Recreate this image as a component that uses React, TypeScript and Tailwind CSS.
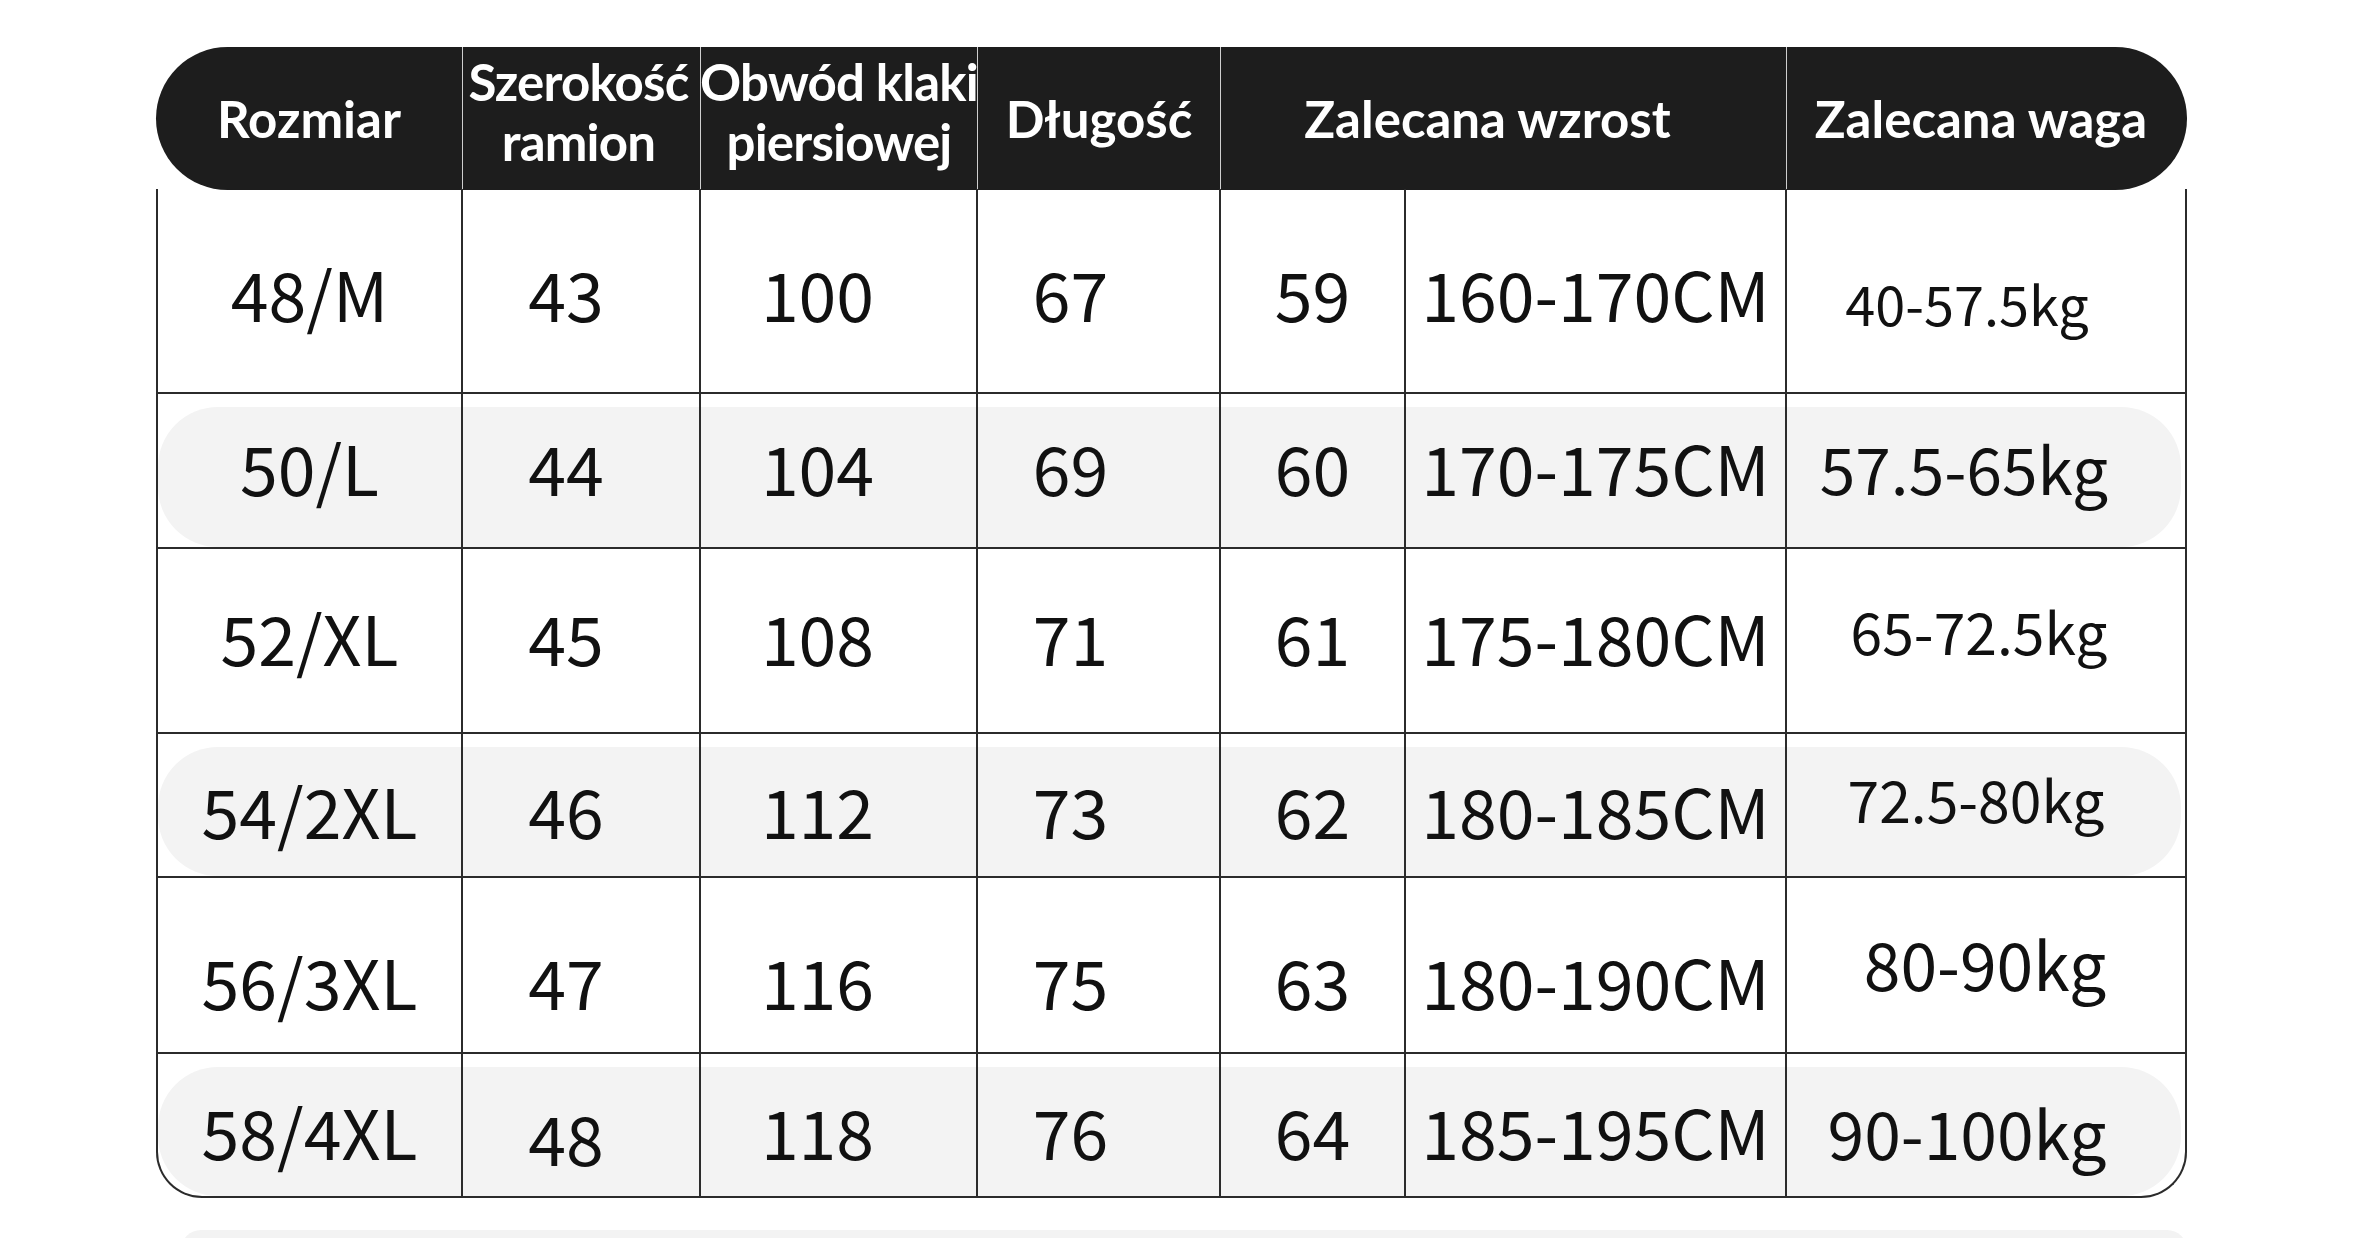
import React from 'react';

type Row = {
  size: string;
  shoulder: string;
  chest: string;
  length: string;
  extra: string;
  height: string;
  weight: string;
  h: string;
  shade: boolean;
  off: string;
  wCls: string;
  shoulderCls?: string;
};

const rows: Row[] = [
  { size: '48/M', shoulder: '43', chest: '100', length: '67', extra: '59', height: '160-170CM', weight: '40-57.5kg', h: 'h-[205px]', shade: false, off: 'pt-[4px]', wCls: 'text-[54px] pt-[24px] pr-[38px]' },
  { size: '50/L', shoulder: '44', chest: '104', length: '69', extra: '60', height: '170-175CM', weight: '57.5-65kg', h: 'h-[155px]', shade: true, off: 'pb-[8px]', wCls: 'text-[64px] pb-[8px] pr-[44px]' },
  { size: '52/XL', shoulder: '45', chest: '108', length: '71', extra: '61', height: '175-180CM', weight: '65-72.5kg', h: 'h-[185px]', shade: false, off: 'pb-[8px]', wCls: 'text-[57px] pb-[20px] pr-[14px]' },
  { size: '54/2XL', shoulder: '46', chest: '112', length: '73', extra: '62', height: '180-185CM', weight: '72.5-80kg', h: 'h-[144px]', shade: true, off: 'pt-[10px]', wCls: 'text-[57px] pb-[14px] pr-[20px]' },
  { size: '56/3XL', shoulder: '47', chest: '116', length: '75', extra: '63', height: '180-190CM', weight: '80-90kg', h: 'h-[176px]', shade: false, off: 'pt-[32px]', wCls: 'text-[66px] pb-[6px] pr-[2px]' },
  { size: '58/4XL', shoulder: '48', chest: '118', length: '76', extra: '64', height: '185-195CM', weight: '90-100kg', h: 'h-[142px]', shade: true, off: 'pt-[12px]', wCls: 'text-[66px] pt-[12px] pr-[38px]', shoulderCls: 'pt-[24px]' },
];

const cell = 'relative flex items-center justify-center border-r-2 border-[#2b2b2b] whitespace-nowrap';
const head = 'flex flex-col items-center justify-center border-r border-[#cfcfcf] whitespace-nowrap';

export default function App() {
  return (
    <div className="w-full h-[1238px] bg-white overflow-hidden pt-[47px] pl-[156px] text-[#111]" style={{ fontFamily: '"Noto Sans CJK SC", "Noto Sans", sans-serif' }}>
      <div className="w-[2031px]">
        {/* nagłówek */}
        <div
          className="grid grid-cols-[307px_238px_277px_243px_566px_400px] h-[143px] bg-[#1d1d1d] rounded-[72px] text-white font-bold text-[51px] leading-[1.16]"
          style={{ fontFamily: 'Lato, "Noto Sans", sans-serif' }}
        >
          <div className={head}>Rozmiar</div>
          <div className={`${head} pr-[6px] pb-[14px] tracking-[-0.8px]`}>
            <span>Szerokość</span>
            <span>ramion</span>
          </div>
          <div className={`${head} pb-[14px] tracking-[-0.8px]`}>
            <span>Obwód klaki</span>
            <span>piersiowej</span>
          </div>
          <div className={head}>Długość</div>
          <div className={`${head} pr-[32px]`}>Zalecana wzrost</div>
          <div className="flex items-center justify-center whitespace-nowrap pr-[12px]">Zalecana waga</div>
        </div>

        {/* wiersze */}
        <div className="border-x-2 border-b-2 border-[#2b2b2b] rounded-b-[46px] overflow-hidden -mt-[1px]">
          {rows.map((r, i) => (
            <div
              key={r.size}
              className={`relative grid grid-cols-[305px_238px_277px_243px_185px_381px_398px] ${r.h} ${i < rows.length - 1 ? 'border-b-2 border-[#2b2b2b]' : ''} text-[68px] leading-none`}
            >
              {r.shade && <div className="absolute left-0 right-[4px] top-[13px] bottom-0 rounded-[60px] bg-[#f3f3f3]" />}
              <div className={`${cell} ${r.off}`}>{r.size}</div>
              <div className={`${cell} ${r.shoulderCls ?? r.off} pr-[30px]`}>{r.shoulder}</div>
              <div className={`${cell} ${r.off} pr-[42px]`}>{r.chest}</div>
              <div className={`${cell} ${r.off} pr-[56px]`}>{r.length}</div>
              <div className={`${cell} ${r.off}`}>{r.extra}</div>
              <div className={`${cell} ${r.off}`}>{r.height}</div>
              <div className={`relative flex items-center justify-center whitespace-nowrap ${r.wCls}`}>{r.weight}</div>
            </div>
          ))}
        </div>

        {/* kolejna sekcja */}
        <div className="mt-[32px] ml-[25px] h-[20px] rounded-t-[40px] bg-[#f3f3f3]" />
      </div>
    </div>
  );
}
